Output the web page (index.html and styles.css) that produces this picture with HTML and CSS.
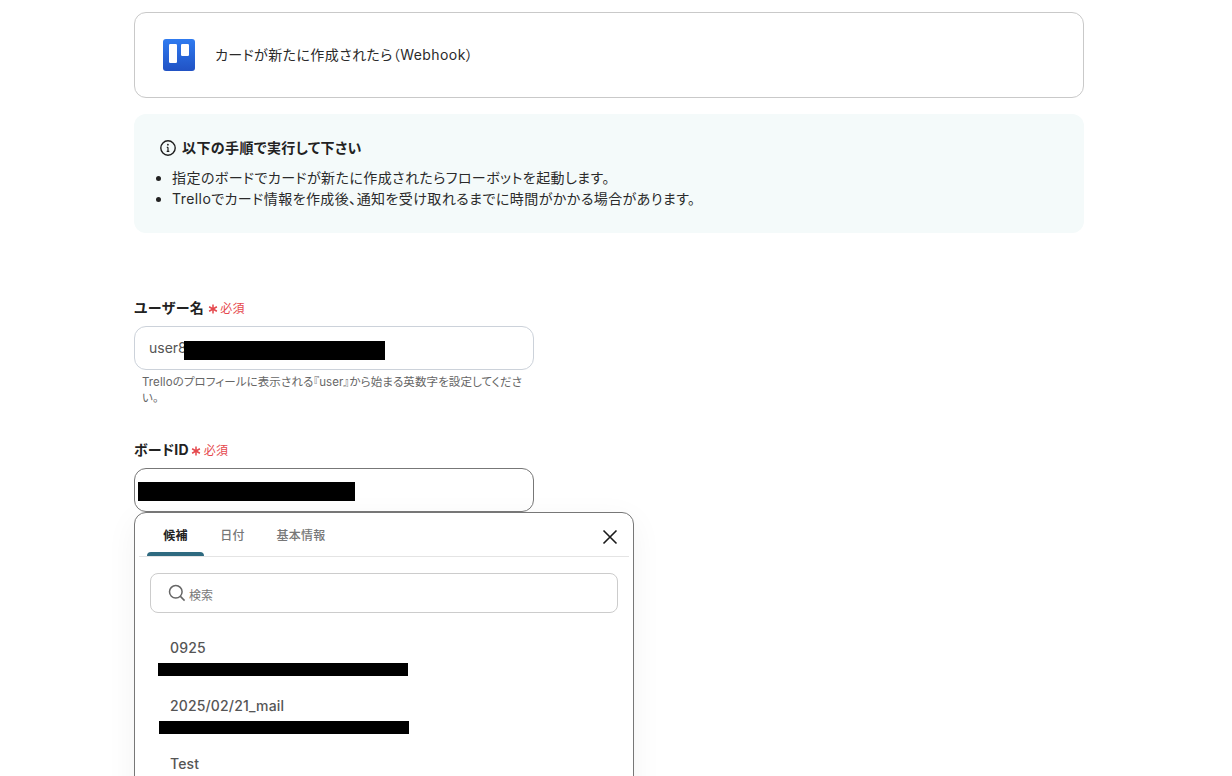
FILE: index.html
```html
<!DOCTYPE html>
<html lang="ja">
<head>
<meta charset="utf-8">
<title>Trello</title>
<link rel="stylesheet" href="styles.css">
</head>
<body>
<main class="page">
  <section class="trigger">
    <svg class="trello" viewBox="0 0 32 32" width="32" height="32">
      <defs><linearGradient id="tg" x1="0" y1="0" x2="0" y2="1"><stop offset="0" stop-color="#2f7bf0"/><stop offset="1" stop-color="#2152c4"/></linearGradient></defs>
      <rect width="32" height="32" rx="3" fill="url(#tg)"/>
      <rect x="6" y="5" width="8" height="19" rx="1.2" fill="#fff"/>
      <rect x="18" y="5" width="8" height="12" rx="1.2" fill="#fff"/>
    </svg>
    <span class="trigger-text">カードが新たに作成されたら（Webhook）</span>
  </section>

  <section class="info">
    <h2 class="info-title">
      <svg viewBox="0 0 16 16" width="16" height="16" fill="none" stroke="#1f1f1f" stroke-width="1.4"><circle cx="8" cy="8" r="7.2"/><path d="M8 7.2v4M6.8 7.3H8M6.7 11.3h2.6" stroke-width="1.2"/><circle cx="7.9" cy="4.7" r=".9" fill="#1f1f1f" stroke="none"/></svg>
      <span>以下の手順で実行して下さい</span>
    </h2>
    <ul class="info-list">
      <li>指定のボードでカードが新たに作成されたらフローボットを起動します。</li>
      <li>Trelloでカード情報を作成後、通知を受け取れるまでに時間がかかる場合があります。</li>
    </ul>
  </section>

  <section class="field field-user">
    <div class="label"><span>ユーザー名</span><span class="req"><svg class="star" viewBox="0 0 10 10" width="10" height="10" stroke="#e5484d" stroke-width="1.5"><path d="M5 .5v9M1.1 2.75l7.8 4.5M8.9 2.75l-7.8 4.5"/></svg>必須</span></div>
    <div class="input"><span class="value">user8</span><i class="redact redact-user"></i></div>
    <p class="help">Trelloのプロフィールに表示される『user』から始まる英数字を設定してください。</p>
  </section>

  <section class="field field-board">
    <div class="label"><span>ボードID</span><span class="req"><svg class="star" viewBox="0 0 10 10" width="10" height="10" stroke="#e5484d" stroke-width="1.5"><path d="M5 .5v9M1.1 2.75l7.8 4.5M8.9 2.75l-7.8 4.5"/></svg>必須</span></div>
    <div class="input input-active"><i class="redact redact-board"></i></div>
  </section>

  <section class="popup">
    <div class="tabs">
      <span class="tab tab-on">候補</span>
      <span class="tab">日付</span>
      <span class="tab">基本情報</span>
      <svg class="close" viewBox="0 0 16 16" width="16" height="16" fill="none" stroke="#1a1a1a" stroke-width="1.6"><path d="M1.5 1.5l13 13M14.5 1.5l-13 13"/></svg>
    </div>
    <div class="search">
      <svg viewBox="0 0 18 18" width="18" height="18" fill="none" stroke="#666" stroke-width="1.5"><circle cx="7.8" cy="7.8" r="6.3"/><path d="M12.4 12.4l4.2 4.2"/></svg>
      <span class="search-text">検索</span>
    </div>
    <ul class="options">
      <li class="option"><span class="opt-name">0925</span><i class="redact-line"></i></li>
      <li class="option option-b"><span class="opt-name">2025/02/21_mail</span><i class="redact-line"></i></li>
      <li class="option"><span class="opt-name">Test</span></li>
    </ul>
  </section>
</main>
</body>
</html>
```
FILE: styles.css
```css
* { box-sizing: border-box; }
html, body { margin: 0; height: 776px; overflow: hidden; background: #fff; }
body { font-family: Inter, "Noto Sans CJK JP", sans-serif; color: #222; font-feature-settings: "palt"; }
.page { width: 950px; margin-left: 134px; padding-top: 12px; }

.trigger { height: 86px; border: 1px solid #c9c9c9; border-radius: 12px; display: flex; align-items: center; gap: 20px; padding-left: 28px; }
.trello { flex: none; }
.trigger-text { font-size: 14px; line-height: 20px; color: #2a2a2a; letter-spacing: .42px; }

.info { margin-top: 16px; height: 119px; background: #f4fafa; border-radius: 12px; padding: 23px 26px 0; }
.info-title { margin: 0; display: flex; align-items: center; gap: 6px; font-size: 14px; line-height: 21px; font-weight: 700; color: #222; letter-spacing: .4px; }
.info-list { list-style: none; margin: 9px 0 0; padding: 0 0 0 12px; font-size: 14px; line-height: 21px; color: #2a2a2a; letter-spacing: .43px; }
.info-list li { position: relative; }
.info-list li::before { content: ""; position: absolute; left: -16px; top: 9px; width: 5px; height: 5px; border-radius: 50%; background: #222; }

.field { width: 400px; }
.field-user { margin-top: 64px; }
.field-board { margin-top: 33px; }
.label { display: flex; align-items: center; gap: 4px; font-size: 14px; line-height: 21px; font-weight: 700; color: #222; letter-spacing: .4px; }
.req { display: flex; align-items: center; gap: 2px; margin-top: 3px; font-size: 12px; line-height: 16px; font-weight: 400; color: #e5484d; }
.star { flex: none; }
.field-board .label { letter-spacing: .2px; }
.field-board .req { margin-left: -2px; gap: 3px; }
.input { position: relative; height: 44px; margin-top: 8px; border: 1px solid #ccd2da; border-radius: 12px; display: flex; align-items: center; padding: 0 0 2px 14px; }
.input-active { border-color: #777; }
.value { font-size: 14px; color: #555; }
.redact { position: absolute; display: block; height: 19px; background: #000; }
.redact-user { left: 49px; top: 14px; width: 201px; }
.redact-board { left: 3px; top: 13px; width: 217px; }
.help { margin: 4px 0 0; padding: 0 8px; font-size: 11.5px; line-height: 16px; color: #666; letter-spacing: .1px; }

.popup { width: 500px; height: 300px; border: 1px solid #777; border-radius: 12px; background: #fff; box-shadow: 0 8px 32px rgba(0,0,0,.05); }
.tabs { position: relative; height: 44px; margin: 0 4px; border-bottom: 1px solid #e4e4e4; display: flex; padding-left: 8px; }
.tab { width: 57px; text-align: center; font-size: 12px; line-height: 45px; font-weight: 500; color: #777; letter-spacing: .25px; }
.tab:nth-child(3) { width: 80px; }
.tab-on { color: #222; font-weight: 700; position: relative; }
.tab-on::after { content: ""; position: absolute; left: 0; right: 0; bottom: 0; height: 4px; background: #2e6a80; border-radius: 4px 4px 0 0; }
.close { position: absolute; right: 11px; top: 16px; }
.search { margin: 16px 15px 0; height: 40px; border: 1px solid #ccc; border-radius: 8px; display: flex; align-items: center; gap: 3px; padding-left: 17px; font-size: 12px; color: #777; }
.search-text { margin-top: 2px; }
.options { list-style: none; margin: 0; padding: 25px 0 0; }
.option { height: 58px; }
.opt-name { display: block; margin-left: 35px; font-size: 14px; line-height: 20px; font-weight: 500; color: #555; letter-spacing: .15px; }
.redact-line { display: block; width: 250px; height: 13px; margin: 5px 0 0 23px; background: #000; }
.option-b .redact-line { margin-left: 24px; }
```
